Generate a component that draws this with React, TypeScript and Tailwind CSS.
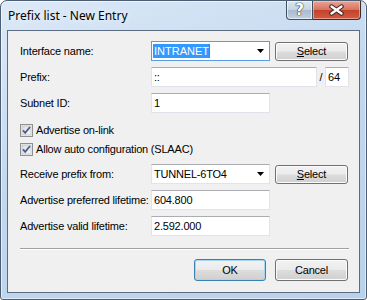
import React from 'react';

const font = "font-['Liberation_Sans',Arial,sans-serif]";

const DropArrow: React.FC = () => (
  <svg width="7" height="4" viewBox="0 0 7 4" className="block">
    <polygon points="0,0 7,0 3.5,4" fill="#000" />
  </svg>
);

const CheckBox: React.FC = () => (
  <svg width="13" height="13" viewBox="0 0 13 13" className="block shrink-0">
    <defs>
      <linearGradient id="cbg" x1="0" y1="0" x2="1" y2="1">
        <stop offset="0" stopColor="#dcdcdc" />
        <stop offset="1" stopColor="#f8f8f8" />
      </linearGradient>
    </defs>
    <rect x="0.5" y="0.5" width="12" height="12" fill="#f4f4f4" stroke="#8e8f8f" />
    <rect x="2" y="2" width="9" height="9" fill="url(#cbg)" stroke="#aeb3b9" strokeWidth="0.6" />
    <path d="M3 6.3 L5.2 8.8 L10 3" fill="none" stroke="#4a5f8d" strokeWidth="1.8" />
  </svg>
);

const Field: React.FC<{ w: string; value?: string; combo?: boolean }> = ({ w, value, combo }) => (
  <div className={`${w} h-[20px] bg-white border border-[#e2e3ea] border-t-[#abadb3] flex items-center pl-[2px] relative`}>
    <span className="leading-none whitespace-nowrap">{value}</span>
    {combo && (
      <div className="absolute right-[5px] top-[7px]">
        <DropArrow />
      </div>
    )}
  </div>
);

const Btn: React.FC<{ w: string; h?: string; def?: boolean; children: React.ReactNode }> = ({ w, h = 'h-[19px]', def, children }) => (
  <div
    className={`${w} ${h} rounded-[3px] border ${def ? 'border-[#3c7fb1]' : 'border-[#707070]'} bg-[linear-gradient(#f2f2f2_0%,#ebebeb_48%,#dddddd_52%,#cfcfcf_100%)] flex items-center justify-center ${def ? 'shadow-[inset_0_0_0_1px_#a6d6f2]' : 'shadow-[inset_0_0_0_1px_#fcfcfc]'}`}
  >
    {children}
  </div>
);

const Row: React.FC<{ label: string; children: React.ReactNode; className?: string }> = ({ label, children, className = '' }) => (
  <div className={`flex items-center h-[20px] ${className}`}>
    <div className="w-[131px] shrink-0 whitespace-nowrap">{label}</div>
    {children}
  </div>
);

const SelectText = () => (
  <span>
    <span className="underline underline-offset-[1px]">S</span>elect
  </span>
);

export default function App() {
  return (
    <div className={`w-[367px] h-[300px] ${font} text-[11px] tracking-[-0.2px] text-black bg-white`}>
      <div className="w-full h-full rounded-t-[7px] rounded-b-[3px] border border-[#4c5e73] bg-[linear-gradient(160deg,#dce9f7_0%,#c3d8ef_45%,#b9d1ea_100%)] shadow-[inset_0_0_0_1px_rgba(255,255,255,0.55)] flex flex-col">
        {/* title bar */}
        <div className="h-[29px] shrink-0 flex items-start">
          <div className="pl-[7px] pt-[7px] text-[12px] tracking-normal font-['Noto_Sans','Open_Sans',sans-serif] leading-[15px] text-black [text-shadow:0_0_6px_#ffffff]">
            Prefix list - New Entry
          </div>
          <div className="ml-auto mr-[5px] flex h-[19px]">
            <div className="w-[27px] h-[19px] rounded-bl-[4px] border border-t-0 border-[#3f5063] bg-[linear-gradient(#dde6f0_0%,#c6d3e2_50%,#a9bbcf_52%,#c0d0e1_100%)] flex items-center justify-center shadow-[inset_0_0_0_1px_rgba(255,255,255,0.6)]">
              <span className="text-[15px] font-bold text-white leading-none font-['DejaVu_Sans',sans-serif] [text-shadow:0_0_1px_#2b3a4c,0_0_1px_#2b3a4c,0_0_1px_#2b3a4c]">?</span>
            </div>
            <div className="w-[48px] h-[19px] rounded-br-[4px] border border-l-0 border-t-0 border-[#3f2a28] bg-[linear-gradient(#e8a596_0%,#d9735f_48%,#c2432c_52%,#d25c3f_100%)] flex items-center justify-center shadow-[inset_0_0_0_1px_rgba(255,220,210,0.5)]">
              <svg width="17" height="12" viewBox="0 0 17 12">
                <path d="M3.5 2.5 L13.5 9.5 M13.5 2.5 L3.5 9.5" stroke="#3a2320" strokeWidth="4.4" strokeLinecap="round" />
                <path d="M3.5 2.5 L13.5 9.5 M13.5 2.5 L3.5 9.5" stroke="#ffffff" strokeWidth="2.4" strokeLinecap="round" />
              </svg>
            </div>
          </div>
        </div>

        {/* client area */}
        <div className="mx-[6px] mb-[6px] flex-1 border border-[#5b6c81] bg-[#f0f0f0] pl-[12px] pt-[10px] flex flex-col">
          <Row label="Interface name:">
            <div className="w-[119px] h-[20px] bg-white border border-[#569de5] flex items-center pl-[1px] relative">
              <span className="bg-[#3399ff] text-white leading-[14px] h-[14px] pl-[1px] tracking-normal">INTRANET</span>
              <span className="w-[1px] h-[14px] bg-[#cc6600]" />
              <div className="absolute right-[5px] top-[7px]">
                <DropArrow />
              </div>
            </div>
            <div className="ml-[5px]">
              <Btn w="w-[73px]">
                <SelectText />
              </Btn>
            </div>
          </Row>

          <Row label="Prefix:" className="mt-[6px]">
            <Field w="w-[166px]" value="::" />
            <div className="w-[8px] text-center">/</div>
            <Field w="w-[24px]" value="64" />
          </Row>

          <Row label="Subnet ID:" className="mt-[6px]">
            <Field w="w-[119px]" value="1" />
          </Row>

          <div className="mt-[11px] h-[13px] flex items-center gap-[3px]">
            <CheckBox />
            <span>Advertise on-link</span>
          </div>
          <div className="mt-[6px] h-[13px] flex items-center gap-[3px]">
            <CheckBox />
            <span>Allow auto configuration (SLAAC)</span>
          </div>

          <Row label="Receive prefix from:" className="mt-[8px]">
            <Field w="w-[119px]" value="TUNNEL-6TO4" combo />
            <div className="ml-[5px]">
              <Btn w="w-[73px]">
                <SelectText />
              </Btn>
            </div>
          </Row>

          <Row label="Advertise preferred lifetime:" className="mt-[6px]">
            <Field w="w-[119px]" value="604.800" />
          </Row>

          <Row label="Advertise valid lifetime:" className="mt-[6px]">
            <Field w="w-[119px]" value="2.592.000" />
          </Row>

          <div className="mt-[12px] w-[329px] h-[2px] border-t border-[#a0a0a0] border-b border-b-white" />

          <div className="mt-[9px] flex gap-[9px] pl-[174px]">
            <Btn w="w-[72px]" h="h-[22px]" def>
              OK
            </Btn>
            <Btn w="w-[73px]" h="h-[22px]">
              Cancel
            </Btn>
          </div>
        </div>
      </div>
    </div>
  );
}
